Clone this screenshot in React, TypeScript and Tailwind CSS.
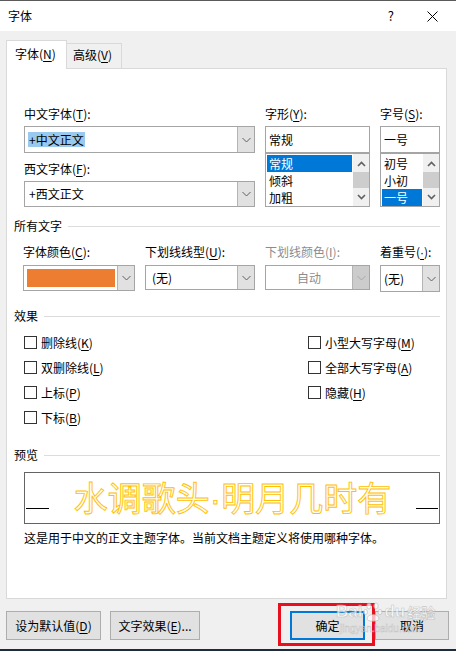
import React from 'react';

function Acc({ k }: { k: string }) {
  return <span className="underline underline-offset-[2px]">{k}</span>;
}

function Chevron({ color = '#606060' }: { color?: string }) {
  return (
    <svg width="9" height="6" viewBox="0 0 9 6">
      <path d="M0.5 1 L4.5 5 L8.5 1" fill="none" stroke={color} strokeWidth="1" />
    </svg>
  );
}

function Arrow({ up }: { up?: boolean }) {
  return (
    <svg width="9" height="6" viewBox="0 0 9 6">
      <path d={up ? 'M1 5 L4.5 1.5 L8 5' : 'M1 1 L4.5 4.5 L8 1'} fill="none" stroke="#606060" strokeWidth="1.6" />
    </svg>
  );
}

function Combo({
  className,
  children,
  disabled,
}: {
  className: string;
  children?: React.ReactNode;
  disabled?: boolean;
}) {
  return (
    <div className={`flex border border-[#a5a5a5] bg-white ${className}`}>
      <div className="flex-1 flex items-center min-w-0">{children}</div>
      <div
        className={`w-[17px] flex items-center justify-center border-l border-[#b4b4b4] ${
          disabled ? 'bg-[#cccccc]' : 'bg-[#e1e1e1]'
        }`}
      >
        <Chevron color={disabled ? '#a8a8a8' : '#606060'} />
      </div>
    </div>
  );
}

function ListBox({ items, selected, width }: { items: string[]; selected: number; width: string }) {
  return (
    <div className={`flex h-[54px] border border-[#a5a5a5] bg-white ${width}`}>
      <div className="flex-1 flex flex-col pt-px pl-px">
        {items.map((it, i) => (
          <div
            key={it}
            className={`h-[17px] flex items-center pl-[2px] ${i === selected ? 'bg-[#0078d7] text-white' : ''}`}
          >
            {it}
          </div>
        ))}
      </div>
      <div className="w-[16px] flex flex-col bg-[#f0f0f0] pt-px ml-px">
        <div className="h-[17px] flex items-center justify-center">
          <Arrow up />
        </div>
        <div className="h-[16px] bg-[#cdcdcd]" />
        <div className="h-[18px] flex items-center justify-center">
          <Arrow />
        </div>
      </div>
    </div>
  );
}

function Heading({ children }: { children: React.ReactNode }) {
  return (
    <div className="flex items-center h-[16px] -ml-[10px]">
      <span>{children}</span>
      <div className="flex-1 h-px bg-[#dcdcdc] ml-[6px]" />
    </div>
  );
}

function Check({ children }: { children: React.ReactNode }) {
  return (
    <div className="h-[25px] flex items-center gap-[4px]">
      <div className="w-[13px] h-[13px] border border-[#333333] bg-white" />
      <span>{children}</span>
    </div>
  );
}

export default function App() {
  return (
    <div className="relative w-[456px] h-[651px] overflow-hidden bg-[#f0f0f0] text-[12px] leading-[16px] text-black font-['Noto_Sans_CJK_SC','Noto_Sans',sans-serif] flex flex-col">
      <div className="h-px bg-[#5a5a5a]" />
      <div className="h-[30px] bg-white flex items-center pl-[8px]">
        <span>字体</span>
        <span className="ml-auto mr-[33px] text-[13px]">?</span>
        <svg width="11" height="11" viewBox="0 0 11 11" className="mr-[18px]">
          <path d="M0.5 0.5 L10.5 10.5 M10.5 0.5 L0.5 10.5" stroke="#000" strokeWidth="1" />
        </svg>
      </div>

      <div className="mt-[9px] flex items-end px-[6px]">
        <div className="relative z-10 -mb-px h-[29px] w-[61px] bg-white border border-b-0 border-[#d9d9d9] flex items-start pt-[5px] pl-[8px]">
          字体(<Acc k="N" />)
        </div>
        <div className="h-[25px] w-[55px] border border-l-0 border-b-0 border-[#d9d9d9] flex items-start pt-[3px] pl-[6px]">
          高级(<Acc k="V" />)
        </div>
      </div>

      <div className="mx-[6px] mr-[9px] h-[531px] bg-white border border-[#d9d9d9] pl-[17px] pr-[6px] pt-[37px] flex flex-col">
        <div className="grid grid-cols-[231px_105px_60px] gap-x-[10px]">
          <div className="flex flex-col">
            <div className="h-[16px]">中文字体(<Acc k="T" />):</div>
            <Combo className="mt-[4px] h-[27px]">
              <span className="ml-[3px] bg-[#99c9ef] px-px leading-[15px]">+中文正文</span>
            </Combo>
            <div className="h-[16px] mt-[8px]">西文字体(<Acc k="F" />):</div>
            <Combo className="mt-[4px] h-[26px]">
              <span className="ml-[4px]">+西文正文</span>
            </Combo>
          </div>
          <div className="flex flex-col">
            <div className="h-[16px]">字形(<Acc k="Y" />):</div>
            <div className="mt-[4px] h-[27px] border border-[#a5a5a5] bg-white flex items-center pl-[3px]">常规</div>
            <ListBox items={['常规', '倾斜', '加粗']} selected={0} width="w-[105px]" />
          </div>
          <div className="flex flex-col">
            <div className="h-[16px]">字号(<Acc k="S" />):</div>
            <div className="mt-[4px] h-[27px] border border-[#a5a5a5] bg-white flex items-center pl-[3px]">一号</div>
            <ListBox items={['初号', '小初', '一号']} selected={2} width="w-[60px]" />
          </div>
        </div>

        <div className="mt-[11px]">
          <Heading>所有文字</Heading>
        </div>
        <div className="mt-[10px] grid grid-cols-[112px_110px_105px_60px] gap-x-[10px] -ml-px">
          <div className="flex flex-col">
            <div className="h-[16px]">字体颜色(<Acc k="C" />):</div>
            <Combo className="mt-[5px] h-[26px]">
              <div className="ml-[3px] h-[18px] w-[88px] bg-[#ed7d31]" />
            </Combo>
          </div>
          <div className="flex flex-col">
            <div className="h-[16px]">下划线线型(<Acc k="U" />):</div>
            <Combo className="mt-[5px] h-[25px]">
              <span className="ml-[6px]">(无)</span>
            </Combo>
          </div>
          <div className="flex flex-col">
            <div className="h-[16px] text-[#8c8c8c]">下划线颜色(<Acc k="I" />):</div>
            <Combo className="mt-[5px] h-[25px]" disabled>
              <span className="w-full text-center text-[#8c8c8c]">自动</span>
            </Combo>
          </div>
          <div className="flex flex-col">
            <div className="h-[16px]">
              着重号(<span className="underline underline-offset-[2px] font-['Liberation_Sans',sans-serif]">·</span>):
            </div>
            <Combo className="mt-[5px] h-[27px]">
              <span className="ml-[3px]">(无)</span>
            </Combo>
          </div>
        </div>

        <div className="mt-[16px]">
          <Heading>效果</Heading>
        </div>
        <div className="mt-[6px] grid grid-cols-[284px_1fr]">
          <div className="flex flex-col">
            <Check>删除线(<Acc k="K" />)</Check>
            <Check>双删除线(<Acc k="L" />)</Check>
            <Check>上标(<Acc k="P" />)</Check>
            <Check>下标(<Acc k="B" />)</Check>
          </div>
          <div className="flex flex-col">
            <Check>小型大写字母(<Acc k="M" />)</Check>
            <Check>全部大写字母(<Acc k="A" />)</Check>
            <Check>隐藏(<Acc k="H" />)</Check>
          </div>
        </div>

        <div className="mt-[17px]">
          <Heading>预览</Heading>
        </div>
        <div className="mt-[9px] h-[52px] border border-[#646464] flex items-center px-px">
          <div className="w-[23px] h-px bg-black self-start mt-[35px]" />
          <div className="flex-1 text-center text-[34px] leading-[40px] text-[#fffdf2] [-webkit-text-stroke:0.9px_#ffc000]">
            水调歌头<span className="font-['Liberation_Sans',sans-serif]">·</span>明月几时有
          </div>
          <div className="w-[22px] h-px bg-black self-start mt-[35px]" />
        </div>
        <div className="mt-[6px] h-[16px]">这是用于中文的正文主题字体。当前文档主题定义将使用哪种字体。</div>
      </div>

      <div className="mt-[12px] flex px-[6px]">
        <div className="w-[95px] h-[29px] bg-[#e1e1e1] border border-[#adadad] flex items-center justify-center">
          设为默认值(<Acc k="D" />)
        </div>
        <div className="ml-[9px] w-[90px] h-[29px] bg-[#e1e1e1] border border-[#adadad] flex items-center justify-center">
          文字效果(<Acc k="E" />)...
        </div>
        <div className="ml-auto w-[75px] h-[29px] bg-[#e1e1e1] border-2 border-[#0078d7] flex items-center justify-center">
          确定
        </div>
        <div className="ml-[10px] w-[74px] h-[29px] bg-[#e1e1e1] border border-[#adadad] flex items-center justify-center mr-[1px]">
          取消
        </div>
      </div>
      <div className="flex-1" />
      <div className="h-[2px] bg-[#1d2b3c]" />

      <div className="absolute left-[278px] top-[603px] w-[97px] h-[43px] border-[3px] border-[#e8101f]" />

      <div className="absolute left-[336px] top-[601px] flex flex-col items-start pointer-events-none opacity-70">
        <div className="flex items-center font-['Liberation_Sans',sans-serif] font-bold text-[17px] leading-[22px] text-white [-webkit-text-stroke:0.6px_#b8b8b8]">
          <span>Bai</span>
          <svg width="20" height="22" viewBox="0 0 20 22" className="mx-px">
            <g fill="#fff" stroke="#b8b8b8" strokeWidth="0.8">
              <ellipse cx="6" cy="5" rx="2.2" ry="3" />
              <ellipse cx="13" cy="5" rx="2.2" ry="3" />
              <ellipse cx="2.5" cy="11" rx="2" ry="2.6" />
              <ellipse cx="17" cy="11" rx="2" ry="2.6" />
              <path d="M4 18 C4 12 16 12 16 18 C16 21 4 21 4 18 Z" />
            </g>
          </svg>
          <span>du</span>
          <span className="ml-[2px] text-[14px] font-['Noto_Sans_CJK_SC',sans-serif]">经验</span>
        </div>
        <div className="text-[10px] leading-[12px] text-white [-webkit-text-stroke:0.5px_#b8b8b8] font-['Liberation_Sans',sans-serif] ml-[4px]">
          jingyan.baidu.com
        </div>
      </div>
    </div>
  );
}
